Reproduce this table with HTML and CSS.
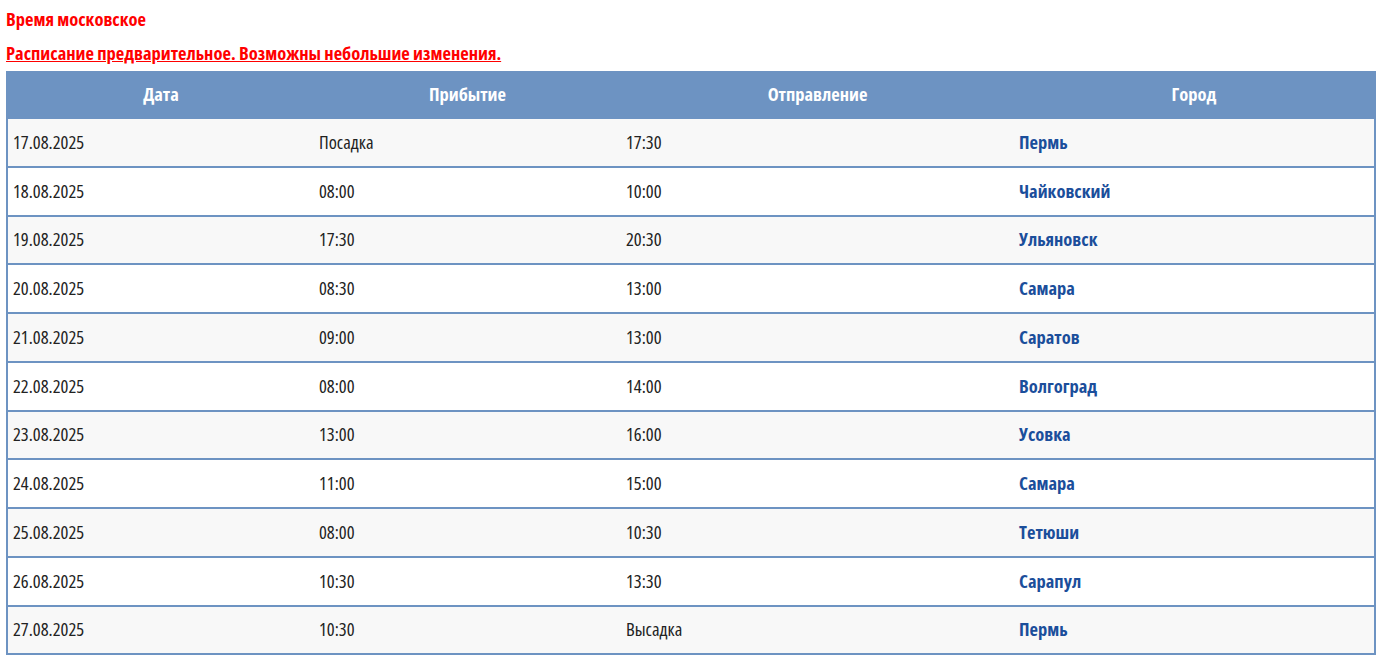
FILE: index.html
```html
<!DOCTYPE html>
<html lang="ru">
<head>
<meta charset="utf-8">
<title>Расписание</title>
<link rel="stylesheet" href="styles.css">
</head>
<body>
<p class="note">Время московское</p>
<p class="note note-link"><a href="#">Расписание предварительное. Возможны небольшие изменения.</a></p>
<table class="schedule">
<colgroup><col class="c1"><col class="c2"><col class="c3"><col class="c4"></colgroup>
<thead>
<tr><th>Дата</th><th>Прибытие</th><th>Отправление</th><th>Город</th></tr>
</thead>
<tbody>
<tr><td>17.08.2025</td><td>Посадка</td><td>17:30</td><td class="city">Пермь</td></tr>
<tr><td>18.08.2025</td><td>08:00</td><td>10:00</td><td class="city">Чайковский</td></tr>
<tr><td>19.08.2025</td><td>17:30</td><td>20:30</td><td class="city">Ульяновск</td></tr>
<tr><td>20.08.2025</td><td>08:30</td><td>13:00</td><td class="city">Самара</td></tr>
<tr><td>21.08.2025</td><td>09:00</td><td>13:00</td><td class="city">Саратов</td></tr>
<tr><td>22.08.2025</td><td>08:00</td><td>14:00</td><td class="city">Волгоград</td></tr>
<tr><td>23.08.2025</td><td>13:00</td><td>16:00</td><td class="city">Усовка</td></tr>
<tr><td>24.08.2025</td><td>11:00</td><td>15:00</td><td class="city">Самара</td></tr>
<tr><td>25.08.2025</td><td>08:00</td><td>10:30</td><td class="city">Тетюши</td></tr>
<tr><td>26.08.2025</td><td>10:30</td><td>13:30</td><td class="city">Сарапул</td></tr>
<tr><td>27.08.2025</td><td>10:30</td><td>Высадка</td><td class="city">Пермь</td></tr>
</tbody>
</table>
</body>
</html>
```

FILE: styles.css
```css
body {
  margin: 0;
  padding: 7px 4px 0 6px;
  font-family: "Open Sans", "Noto Sans", sans-serif;
  font-stretch: condensed;
  font-size: 18.5px;
  color: #222;
  background: #fff;
}
.note {
  margin: 0 0 10px 0;
  color: #ff0000;
  font-weight: bold;
  line-height: 24px;
}
.note-link {
  margin-bottom: 6px;
}
.note-link a {
  color: #ff0000;
  text-decoration: underline;
}
.schedule {
  width: 1368px;
  border-collapse: collapse;
  border: 2px solid #6d93c2;
  table-layout: fixed;
}
.c1 { width: 307px; }
.c2 { width: 307px; }
.c3 { width: 393px; }
.c4 { width: 361px; }
.schedule th {
  background: #6d93c2;
  color: #fff;
  font-weight: bold;
  height: 41px;
  padding: 0 6px 3px;
  text-align: center;
}
.schedule td {
  height: 44.75px;
  padding: 0 5px 2px;
  border-top: 2px solid #6d93c2;
  text-align: left;
}
.schedule tbody tr:nth-child(odd) td {
  background: #f8f8f8;
}
.schedule .city {
  color: #1b4e9b;
  font-weight: bold;
}
```
